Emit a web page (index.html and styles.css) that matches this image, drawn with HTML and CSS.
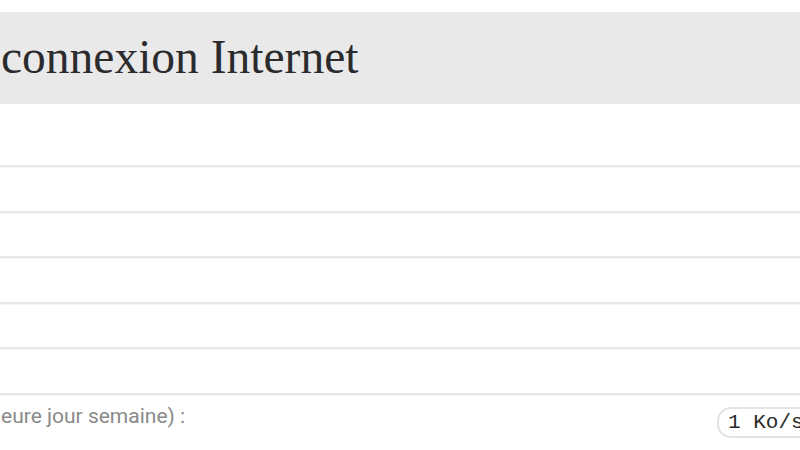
FILE: index.html
```html
<!DOCTYPE html>
<html lang="fr">
<head>
<meta charset="utf-8">
<title>connexion Internet</title>
<link rel="stylesheet" href="styles.css">
</head>
<body>
<div class="page">
  <div class="header"><h1 class="title">connexion Internet</h1></div>
  <div class="rows">
    <div class="row row-first"></div>
    <div class="row"></div>
    <div class="row"></div>
    <div class="row"></div>
    <div class="row"></div>
    <div class="row"></div>
  </div>
  <div class="field">
    <span class="label">eure jour semaine) :</span>
    <span class="pill">1 Ko/s</span>
  </div>
</div>
</body>
</html>
```
FILE: styles.css
```css
html, body {
  margin: 0;
  padding: 0;
  background: #ffffff;
}
.page {
  width: 800px;
  height: 450px;
  overflow: hidden;
  padding-top: 12px;
  box-sizing: border-box;
}
.header {
  height: 92px;
  background: #e9e9e9;
  display: flex;
  align-items: center;
  padding-left: 1px;
}
.title {
  margin: 0;
  font-family: "Liberation Serif", "DejaVu Serif", serif;
  font-weight: normal;
  font-size: 47.5px;
  line-height: 1;
  color: #2b2b2e;
  white-space: nowrap;
}
.rows {
  display: flex;
  flex-direction: column;
}
.row {
  height: 43.6px;
  border-bottom: 2px solid #e7e7e7;
  box-shadow: 0 1px 0 #f6f6f6;
}
.row-first {
  height: 61px;
}
.field {
  display: flex;
  align-items: flex-start;
  justify-content: space-between;
  padding-left: 1px;
}
.label {
  margin-top: 9px;
  font-family: Roboto, "Liberation Sans", sans-serif;
  font-size: 21px;
  line-height: 24px;
  color: #8a8a8a;
  white-space: nowrap;
}
.pill {
  margin-top: 12px;
  margin-right: -60px;
  width: 130px;
  height: 27px;
  border: 2px solid #e4e4e4;
  border-radius: 14px;
  font-family: "Liberation Mono", monospace;
  font-size: 21px;
  line-height: 27px;
  color: #2a2a2a;
  padding-left: 9px;
  box-sizing: content-box;
  white-space: nowrap;
}
```
